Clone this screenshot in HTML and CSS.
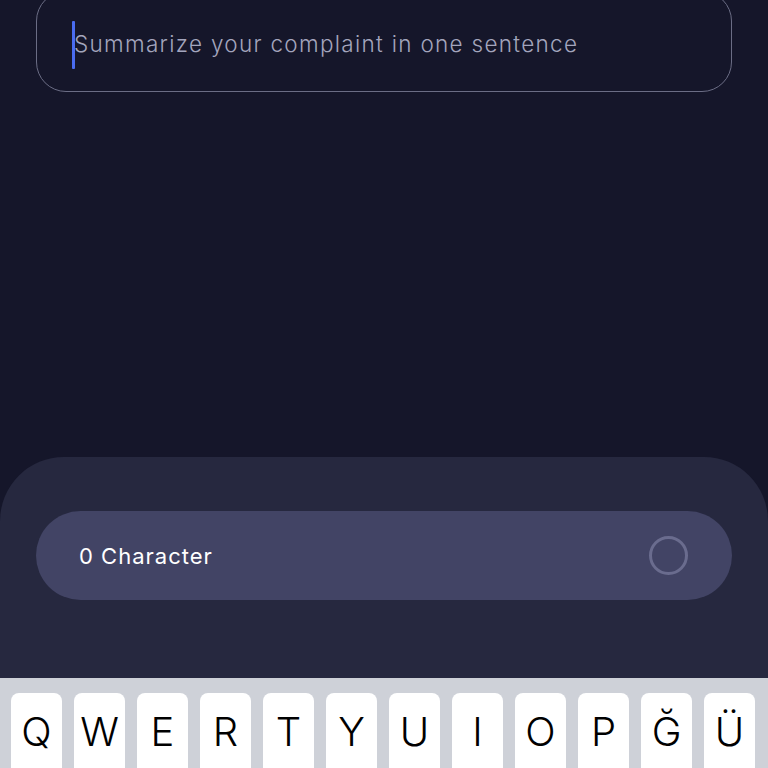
FILE: index.html
```html
<!DOCTYPE html>
<html>
<head>
<meta charset="utf-8">
<link rel="stylesheet" href="styles.css">
</head>
<body>
<div class="screen">
  <div class="field">
    <span class="caret"></span>
    <span class="placeholder">Summarize your complaint in one sentence</span>
  </div>
  <div class="spacer"></div>
  <div class="panel">
    <div class="counter">
      <span class="count">0 Character</span>
      <span class="ring"></span>
    </div>
  </div>
  <div class="keyboard">
    <div class="key">Q</div>
    <div class="key">W</div>
    <div class="key">E</div>
    <div class="key">R</div>
    <div class="key">T</div>
    <div class="key">Y</div>
    <div class="key">U</div>
    <div class="key">I</div>
    <div class="key">O</div>
    <div class="key">P</div>
    <div class="key">Ğ</div>
    <div class="key">Ü</div>
  </div>
</div>
</body>
</html>
```
FILE: styles.css
```css
html, body {
  margin: 0;
  padding: 0;
  background: #15162a;
}
.screen {
  width: 768px;
  height: 768px;
  overflow: hidden;
  display: flex;
  flex-direction: column;
  font-family: Inter, "Noto Sans", sans-serif;
}
.field {
  box-sizing: border-box;
  margin: -9px 36px 0 36px;
  height: 101px;
  flex: 0 0 auto;
  border: 1.5px solid #6b6d85;
  border-radius: 30px;
  display: flex;
  align-items: center;
  padding-left: 35px;
  padding-top: 4px;
}
.caret {
  width: 3px;
  height: 48px;
  background: #4a6cf0;
  border-radius: 1px;
  flex: 0 0 auto;
  margin-top: 2px;
}
.placeholder {
  color: #a3a5bd;
  font-size: 22.5px;
  font-weight: 300;
  letter-spacing: 1.3px;
  margin-left: -1px;
}
.spacer {
  flex: 1 1 auto;
}
.panel {
  flex: 0 0 auto;
  height: 221px;
  box-sizing: border-box;
  background: #26283f;
  border-radius: 64px 64px 0 0;
  padding: 54px 36px 0 36px;
}
.counter {
  height: 89px;
  border-radius: 45px;
  background: #424465;
  display: flex;
  align-items: center;
  justify-content: space-between;
  padding: 0 44px 0 43px;
}
.count {
  color: #ffffff;
  font-size: 22px;
  letter-spacing: 1px;
}
.ring {
  box-sizing: border-box;
  width: 39px;
  height: 39px;
  border-radius: 50%;
  border: 3px solid #6a6c8e;
}
.keyboard {
  flex: 0 0 auto;
  height: 90px;
  box-sizing: border-box;
  background: #ced1d8;
  padding: 15px 13px 0 11px;
  display: flex;
  gap: 12px;
  overflow: hidden;
}
.key {
  flex: 0 0 51px;
  height: 90px;
  background: #ffffff;
  border-radius: 8px;
  display: flex;
  justify-content: center;
  align-items: flex-start;
  padding-top: 19px;
  box-sizing: border-box;
  color: #000000;
  font-size: 40px;
  font-weight: 300;
  line-height: 1;
}
```
